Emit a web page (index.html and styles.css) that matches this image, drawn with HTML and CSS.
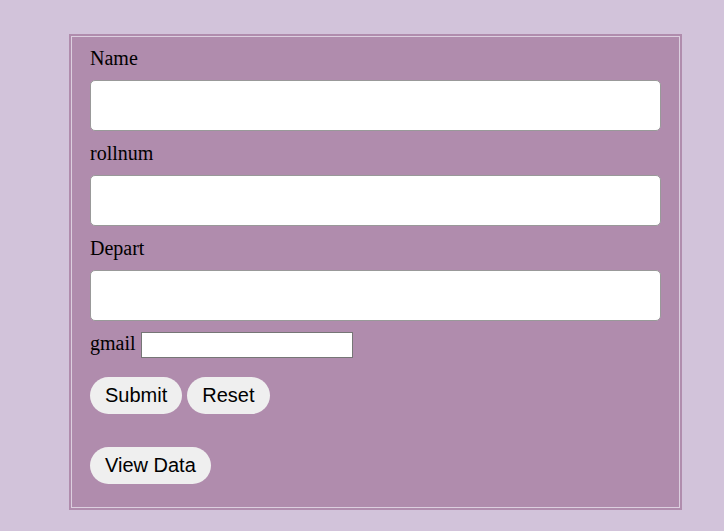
FILE: index.html
```html
<!DOCTYPE html>
<html>
<head>
<meta charset="utf-8">
<link rel="stylesheet" href="styles.css">
</head>
<body>
<div class="frame">
  <form class="form">
    <label class="label">Name</label>
    <input class="field" type="text">
    <label class="label">rollnum</label>
    <input class="field" type="text">
    <label class="label">Depart</label>
    <input class="field" type="text">
    <div class="mail-row"><span class="mail-label">gmail</span> <input class="mail" type="text"></div>
    <div class="btn-row"><button type="button" class="btn">Submit</button> <button type="button" class="btn">Reset</button></div>
    <div class="view-row"><button type="button" class="btn">View Data</button></div>
  </form>
</div>
</body>
</html>
```
FILE: styles.css
```css
html, body {
  margin: 0;
  padding: 0;
  background: #d2c3da;
}
body {
  font-family: "Liberation Serif", serif;
  font-size: 20px;
  color: #000;
}
.frame {
  margin: 34px 0 0 69px;
  width: 613px;
  height: 476px;
  box-sizing: border-box;
  background: #b08cad;
  padding: 2px;
}
.form {
  box-sizing: border-box;
  height: 100%;
  border: 1px solid #dccfdf;
  padding: 10px 18px 0 18px;
}
.label {
  display: block;
  line-height: 23px;
  height: 23px;
}
.field {
  display: block;
  box-sizing: border-box;
  width: 571px;
  height: 51px;
  margin: 10px 0 11px 0;
  border: 1px solid #999;
  border-radius: 5px;
  background: #fff;
  padding: 0 8px;
  font-size: 17px;
}
.mail-row {
  height: 26px;
  display: flex;
  align-items: flex-start;
}
.mail-label {
  line-height: 23px;
  margin-right: 5px;
}
.mail {
  box-sizing: border-box;
  width: 212px;
  height: 26px;
  border: 1px solid #767676;
  background: #fff;
  padding: 1px 2px;
  font-size: 16.67px;
  margin: 0;
}
.btn-row {
  margin-top: 19px;
  display: flex;
  gap: 5px;
}
.view-row {
  margin-top: 33px;
  display: flex;
}
.btn {
  font-family: "Liberation Sans", Arial, sans-serif;
  font-size: 20px;
  line-height: 23px;
  height: 37px;
  padding: 7px 15px;
  border: none;
  border-radius: 19px;
  background: #efefef;
  color: #000;
  margin: 0;
}
```
